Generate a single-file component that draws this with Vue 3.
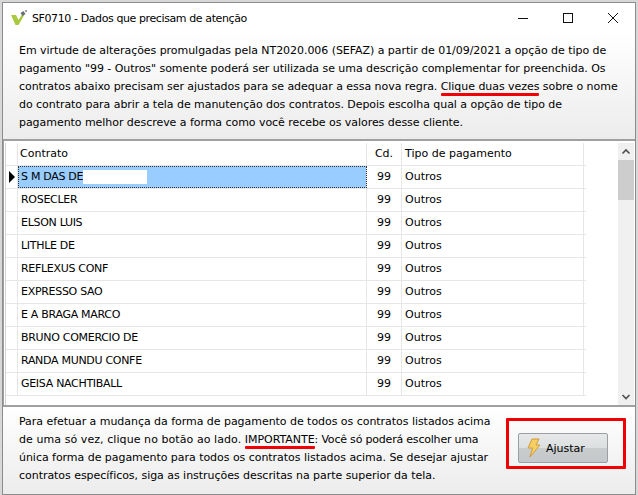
<template>
  <div class="screen">
    <div class="window">
      <div class="titlebar">
        <svg class="app-icon" width="16" height="16" viewBox="0 0 16 16">
          <path d="M0 5 L5 5 L7.5 10 L12 3 L13 5.5 L7.5 15 L4.5 15 Z" fill="#a9c93f" />
          <path d="M9.5 3 L12.5 1 L14.5 4 L11.5 6 Z" fill="#6a6f75" />
          <rect x="14" y="0" width="2" height="2" fill="#9a9ea3" />
        </svg>
        <span class="title">SF0710 - Dados que precisam de atenção</span>
        <div class="win-buttons">
          <svg width="12" height="12" viewBox="0 0 12 12"><path d="M1 6.5H11" stroke="#111" /></svg>
          <svg width="12" height="12" viewBox="0 0 12 12"><rect x="1.5" y="1.5" width="9" height="9" fill="none" stroke="#111" /></svg>
          <svg width="12" height="12" viewBox="0 0 12 12"><path d="M1 1L11 11M11 1L1 11" stroke="#111" /></svg>
        </div>
      </div>

      <div class="notice">
        Em virtude de alterações promulgadas pela NT2020.006 (SEFAZ) a partir de 01/09/2021 a opção de tipo de<br />
        pagamento "99 - Outros" somente poderá ser utilizada se uma descrição complementar for preenchida. Os<br />
        contratos abaixo precisam ser ajustados para se adequar a essa nova regra. <span class="marked">Clique duas vezes</span> sobre o nome<br />
        do contrato para abrir a tela de manutenção dos contratos. Depois escolha qual a opção de tipo de<br />
        pagamento melhor descreve a forma como você recebe os valores desse cliente.
      </div>

      <div class="grid-area">
        <div class="grid">
          <div class="row head">
            <div class="ind"></div>
            <div class="c-name">Contrato</div>
            <div class="c-cd">Cd.</div>
            <div class="c-tipo">Tipo de pagamento</div>
          </div>
          <div v-for="(r, i) in rows" :key="r" class="row">
            <div class="ind"><span v-if="i === 0" class="arrow"></span></div>
            <div class="c-name" :class="{ selected: i === 0 }">
              <span class="caps">{{ r }}</span><span v-if="i === 0" class="blank"></span>
            </div>
            <div class="c-cd">99</div>
            <div class="c-tipo">Outros</div>
          </div>
        </div>
        <div class="scrollbar">
          <svg width="16" height="17" viewBox="0 0 16 17"><path d="M4.5 10.5L8 7L11.5 10.5" fill="none" stroke="#505050" stroke-width="1.6" /></svg>
          <div class="track"><div class="thumb"></div></div>
          <svg width="16" height="17" viewBox="0 0 16 17"><path d="M4.5 7L8 10.5L11.5 7" fill="none" stroke="#505050" stroke-width="1.6" /></svg>
        </div>
      </div>

      <div class="footer">
        <div class="footer-text">
          Para efetuar a mudança da forma de pagamento de todos os contratos listados acima<br />
          <span class="wide">de uma só vez, clique no botão ao lado. </span><span class="marked">IMPORTANTE</span><span class="tight">: Você só poderá escolher uma</span><br />
          única forma de pagamento para todos os contratos listados acima. Se desejar ajustar<br />
          contratos específicos, siga as instruções descritas na parte superior da tela.
        </div>
        <div class="redbox">
          <button class="btn">
            <svg width="14" height="20" viewBox="0 0 14 20">
              <path d="M5 1H12L9 7H13L3 19L5.5 10H1Z" fill="#f6cf62" stroke="#d39a3c" stroke-width="1" stroke-linejoin="round" />
            </svg>
            <span>Ajustar</span>
          </button>
        </div>
      </div>
    </div>
  </div>
</template>

<script setup>
const rows = [
  'S M DAS DE',
  'ROSECLER',
  'ELSON LUIS',
  'LITHLE DE',
  'REFLEXUS CONF',
  'EXPRESSO SAO',
  'E A BRAGA MARCO',
  'BRUNO COMERCIO DE',
  'RANDA MUNDU CONFE',
  'GEISA NACHTIBALL'
]
</script>

<style>
html,
body {
  margin: 0;
  background: #f0f0f0;
}
</style>

<style scoped>
.screen {
  width: 638px;
  height: 495px;
  padding: 2px 2px 0;
  box-sizing: border-box;
  background: #d8d8d8;
  overflow: hidden;
  font-family: "DejaVu Sans", sans-serif;
  font-size: 11px;
  color: #000;
}

.window {
  height: 493px;
  border: 1px solid #8c8c8c;
  display: flex;
  flex-direction: column;
  background: #fff;
  box-sizing: border-box;
}

.titlebar {
  height: 29px;
  display: flex;
  align-items: center;
  padding-left: 8px;
  background: #fff;
  flex: none;
}

.app-icon {
  margin-right: 5px;
}

.title {
  flex: 1;
  padding-top: 2px;
  letter-spacing: -0.4px;
}

.win-buttons {
  display: flex;
  gap: 33px;
  padding-right: 16px;
}

.notice {
  height: 107px;
  box-sizing: border-box;
  padding: 10px 0 0 16px;
  line-height: 18px;
  letter-spacing: -0.05px;
  white-space: nowrap;
  background: linear-gradient(#fff, #ececec);
  flex: none;
}

.marked {
  position: relative;
}

.marked::after {
  content: "";
  position: absolute;
  left: 0;
  right: 0;
  bottom: -3px;
  height: 3px;
  border-radius: 1px;
  background: #f00000;
}

.grid-area {
  height: 268px;
  box-sizing: border-box;
  display: flex;
  justify-content: space-between;
  padding: 2px 0 0 2px;
  border-top: 2px solid #a0a0a0;
  border-bottom: 2px solid #a0a0a0;
  border-left: 1px solid #a0a0a0;
  background: #fff;
  flex: none;
}

.grid {
  width: 580px;
  border-left: 1px solid #d4d4d4;
  margin-left: -1px;
}

.row {
  display: flex;
  height: 23px;
  box-sizing: border-box;
  border-bottom: 1px solid #e6e6e6;
  line-height: 22px;
}

.ind {
  width: 11px;
  flex: none;
  border-right: 1px solid #e6e6e6;
  display: flex;
  align-items: center;
  justify-content: center;
}

.arrow {
  border-left: 6px solid #000;
  border-top: 6px solid transparent;
  border-bottom: 6px solid transparent;
}

.c-name {
  width: 349px;
  flex: none;
  box-sizing: border-box;
  padding-left: 3px;
  border-right: 1px solid #e6e6e6;
  white-space: nowrap;
  overflow: hidden;
}

.head .c-name {
  padding-left: 2px;
}

.caps {
  letter-spacing: -0.3px;
}

.selected {
  background: #99ccff;
  outline: 1px dotted #333;
  outline-offset: -1px;
  display: flex;
  align-items: center;
}

.blank {
  display: inline-block;
  width: 64px;
  height: 14px;
  background: #fff;
}

.c-cd {
  width: 34px;
  flex: none;
  text-align: center;
  border-right: 1px solid #e6e6e6;
}

.c-tipo {
  width: 182px;
  flex: none;
  box-sizing: border-box;
  padding-left: 3px;
  border-right: 1px solid #e6e6e6;
}

.scrollbar {
  width: 16px;
  margin-right: 1px;
  display: flex;
  flex-direction: column;
  background: #f0f0f0;
}

.track {
  flex: 1;
}

.thumb {
  height: 40px;
  background: #cdcdcd;
}

.footer {
  flex: 1;
  display: flex;
  align-items: flex-start;
  padding: 6px 0 0 16px;
  background: linear-gradient(#fff, #ececec);
}

.footer-text {
  width: 487px;
  line-height: 18px;
  letter-spacing: -0.04px;
  white-space: nowrap;
}

.wide {
  letter-spacing: 0.07px;
}

.tight {
  letter-spacing: -0.2px;
}

.redbox {
  margin-top: 5px;
  width: 120px;
  height: 51px;
  box-sizing: border-box;
  border: 3px solid #f00000;
  border-radius: 1px;
  padding: 12px 0 0 9px;
}

.btn {
  width: 90px;
  height: 30px;
  padding: 0 0 0 8px;
  display: flex;
  align-items: center;
  gap: 5px;
  border: 1px solid #9a9fa3;
  border-radius: 2px;
  background: linear-gradient(#e6e8e9 0%, #dcdfe0 49%, #c8cccd 51%, #c4c8ca 100%);
  font-family: inherit;
  font-size: 11px;
  color: #000;
}
</style>
